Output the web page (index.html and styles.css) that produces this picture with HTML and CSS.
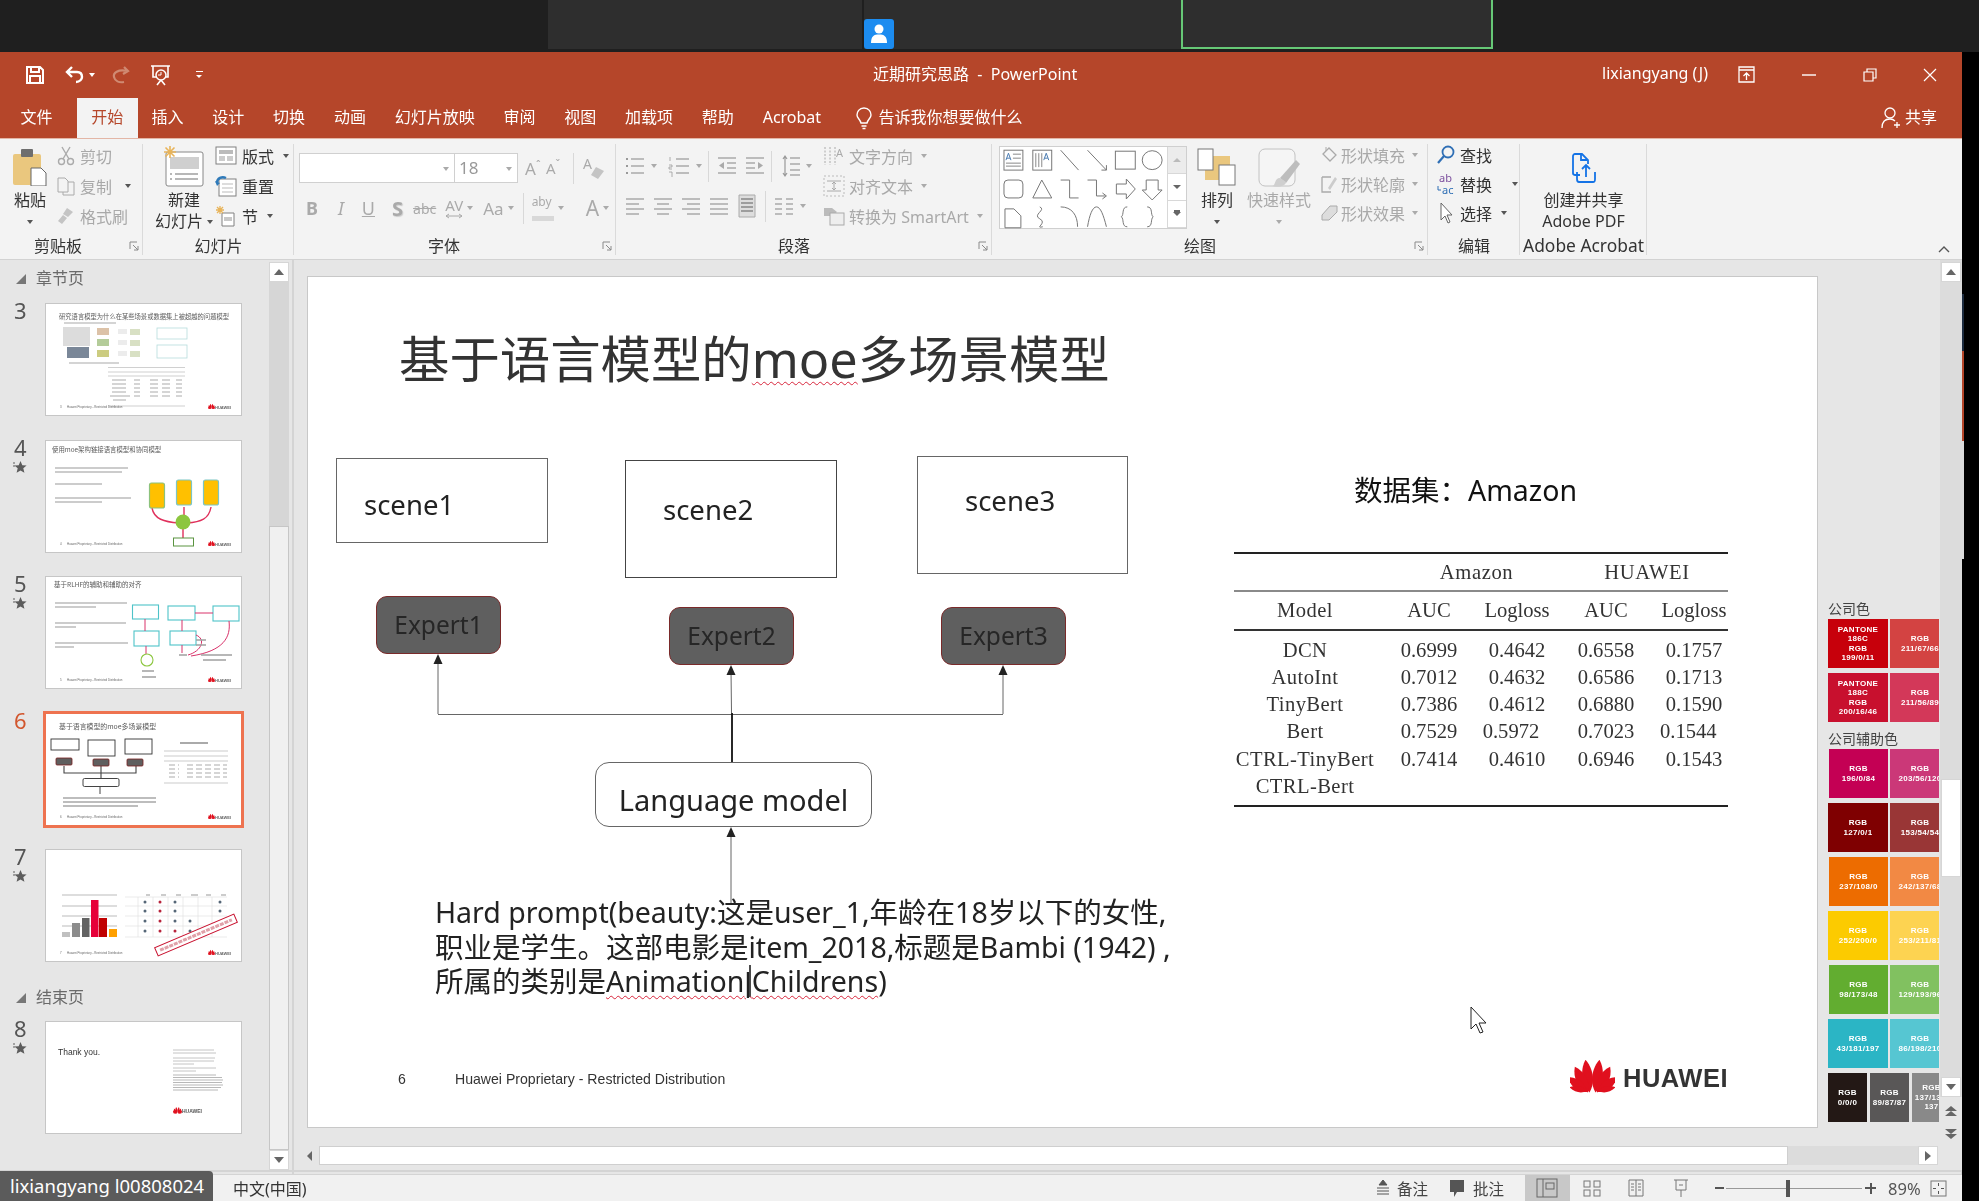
FILE: index.html
```html
<!DOCTYPE html>
<html lang="zh-CN">
<head>
<meta charset="utf-8">
<title>近期研究思路 - PowerPoint</title>
<link rel="stylesheet" href="styles.css">
</head>
<body>

<svg class="defs" width="0" height="0">
  <symbol id="hw" viewBox="0 0 45 34">
    <g fill="#e0101e">
      <path d="M0 0C-7-9-7-23 0-33C7-23 7-9 0 0Z" transform="translate(19.5 32.500) rotate(-7)"/>
      <path d="M0 0C-7-9-7-23 0-33C7-23 7-9 0 0Z" transform="translate(25.500 32.500) rotate(7)"/>
      <path d="M0 0C-7-8-7-20 0-29C7-20 7-8 0 0Z" transform="translate(18 32.500) rotate(-27)"/>
      <path d="M0 0C-7-8-7-20 0-29C7-20 7-8 0 0Z" transform="translate(27 32.500) rotate(27)"/>
      <path d="M0 0C-6-7-6-16 0-24C6-16 6-7 0 0Z" transform="translate(17 32) rotate(-52)"/>
      <path d="M0 0C-6-7-6-16 0-24C6-16 6-7 0 0Z" transform="translate(28 32) rotate(52)"/>
      <path d="M0 0C-4-5-4-12 0-18C4-12 4-5 0 0Z" transform="translate(17 31) rotate(-78)"/>
      <path d="M0 0C-4-5-4-12 0-18C4-12 4-5 0 0Z" transform="translate(28 31) rotate(78)"/>
    </g>
  </symbol>
  <symbol id="launch" viewBox="0 0 10 10">
    <path d="M1 1H8M1 1V8M4 4L9 9M9 5V9H5" fill="none" stroke="#8a8a8a"/>
  </symbol>
  <symbol id="star" viewBox="0 0 14 14">
    <path d="M7.500 1L9.300 5.200 13.600 5.500 10.300 8.300 11.400 12.800 7.500 10.400 3.600 12.800 4.700 8.300 1.400 5.500 5.700 5.200Z" fill="#5c5c5c"/>
    <path d="M0 3H2M0 6H2" stroke="#5c5c5c"/>
  </symbol>
</svg>

<div class="meeting">
  <div class="tile tile-a"></div>
  <div class="tile tile-b">
    <div class="avatar">
      <svg width="30" height="30" viewBox="0 0 30 30"><circle cx="15" cy="10" r="4.500" fill="#fff"/><path d="M7 24C7 17 10 15.500 15 15.500S23 17 23 24Z" fill="#fff"/></svg>
    </div>
  </div>
  <div class="tile tile-c"></div>
</div>

<div class="screen">
  <div class="app">

    <header class="titlebar">
      <div class="qat">
        <svg class="q-save" width="20" height="20" viewBox="0 0 20 20"><path d="M2 2H15L18 5V18H2Z M6 2V7H14V2 M5 18V11H15V18" fill="none" stroke="#fff" stroke-width="2"/></svg>
        <svg class="q-undo" width="20" height="20" viewBox="0 0 20 20"><path d="M7 2L2 7L7 12M2 7H12C16 7 17 10 17 12S15 17 11 17" fill="none" stroke="#fff" stroke-width="2.400"/></svg>
        <span class="caret caret-w q-undo-c"></span>
        <svg class="q-redo" width="20" height="20" viewBox="0 0 20 20"><path d="M14 2L18 6L13 9M17 6C8 4 3 8 4 12S9 18 14 17" fill="none" stroke="#d08a72" stroke-width="2.200"/></svg>
        <svg class="q-show" width="24" height="24" viewBox="0 0 24 24"><path d="M2 3H21M4 3V14H19V3M12 14V17M8 22L12 17L16 22" fill="none" stroke="#fff" stroke-width="1.600"/><circle cx="12" cy="12" r="5" fill="#b5462a" stroke="#fff" stroke-width="1.500"/><path d="M12 9V12H9" stroke="#fff" fill="none"/></svg>
        <span class="q-more"></span>
      </div>
      <div class="doc-name">近期研究思路&nbsp; -&nbsp; PowerPoint</div>
      <div class="win">
        <span class="user">lixiangyang (J)</span>
        <svg class="w-ribbon" width="18" height="18" viewBox="0 0 18 18"><path d="M1 1H16V16H1ZM1 4H16M8.500 14V7M5.500 10L8.500 7L11.500 10" fill="none" stroke="#fff" stroke-width="1.300"/></svg>
        <svg class="w-min" width="14" height="14" viewBox="0 0 14 14"><path d="M0 7H14" stroke="#fff" stroke-width="1.400"/></svg>
        <svg class="w-max" width="14" height="14" viewBox="0 0 14 14"><path d="M1 4H10V13H1ZM4 4V1H13V10H10" fill="none" stroke="#fff" stroke-width="1.200"/></svg>
        <svg class="w-close" width="14" height="14" viewBox="0 0 14 14"><path d="M1 1L13 13M13 1L1 13" stroke="#fff" stroke-width="1.200"/></svg>
      </div>
    </header>

    <nav class="tabs">
      <span class="tab tab-file">文件</span>
      <span class="tab tab-on">开始</span>
      <span class="tab">插入</span>
      <span class="tab">设计</span>
      <span class="tab">切换</span>
      <span class="tab">动画</span>
      <span class="tab">幻灯片放映</span>
      <span class="tab">审阅</span>
      <span class="tab">视图</span>
      <span class="tab">加载项</span>
      <span class="tab">帮助</span>
      <span class="tab">Acrobat</span>
      <span class="tell">
        <svg width="18" height="24" viewBox="0 0 18 24"><path d="M9 2C4 2 2 6 2 9C2 12 5 13 6 17H12C13 13 16 12 16 9C16 6 14 2 9 2ZM6.500 20H11.500M7.500 22.500H10.500" fill="none" stroke="#fff" stroke-width="1.400"/></svg>
        告诉我你想要做什么
      </span>
      <span class="share">
        <svg width="20" height="24" viewBox="0 0 20 24"><circle cx="9" cy="7" r="5" fill="none" stroke="#fff" stroke-width="1.300"/><path d="M1 22C1 15 5 13 9 13C11 13 13 14 14 15M13 19H19M16 16V22" fill="none" stroke="#fff" stroke-width="1.300"/></svg>
        共享
      </span>
    </nav>

    <section class="ribbon">

      <div class="grp g-clip">
        <div class="grp-body">
          <div class="big big-paste">
            <svg width="36" height="38" viewBox="0 0 36 38"><rect x="1" y="6" width="28" height="31" rx="2" fill="#eac77e"/><rect x="9" y="1" width="12" height="8" rx="1" fill="#6e6e6e"/><path d="M19 20H29L34 25V38H19Z" fill="#fff" stroke="#666"/></svg>
            <span>粘贴</span>
            <i class="caret"></i>
          </div>
          <div class="rows off">
            <div class="row"><svg width="18" height="20" viewBox="0 0 18 20"><path d="M5 1L12 13M13 1L6 13" stroke="#aaa" stroke-width="1.400"/><circle cx="4.500" cy="15.500" r="3" fill="none" stroke="#aaa" stroke-width="1.400"/><circle cx="13.500" cy="15.500" r="3" fill="none" stroke="#aaa" stroke-width="1.400"/></svg>剪切</div>
            <div class="row"><svg width="18" height="20" viewBox="0 0 18 20"><path d="M1 2H8L11 5V16H1ZM11 6H17V19H6V16" fill="#f3f3f3" stroke="#aaa"/></svg>复制<i class="caret caret-r"></i></div>
            <div class="row"><svg width="18" height="20" viewBox="0 0 18 20"><path d="M10 2L16 6L11 11L6 8ZM6 9L10 12L5 18L1 15Z" fill="#c4c4c4"/></svg>格式刷</div>
          </div>
        </div>
        <div class="grp-label lbl-clip">剪贴板<svg class="launch" width="10" height="10"><use href="#launch"/></svg></div>
      </div>

      <div class="grp g-slide">
        <div class="grp-body">
          <div class="big big-new">
            <svg width="42" height="41" viewBox="0 0 42 41"><rect x="4" y="6" width="37" height="34" rx="2" fill="#fff" stroke="#888"/><rect x="8" y="11" width="29" height="12" fill="#cfcfcf"/><path d="M8 28H10M13 28H36M8 33H10M13 33H36" stroke="#a0a0a0" stroke-width="1.500"/><g stroke="#e8b45a" stroke-width="1.600"><path d="M8 0V12M2 6H14M3.500 1.500L12.500 10.500M12.500 1.500L3.500 10.500"/></g></svg>
            <span>新建</span>
            <span class="big-two">幻灯片<i class="caret"></i></span>
          </div>
          <div class="rows">
            <div class="row"><svg width="22" height="20" viewBox="0 0 22 20"><rect x="1" y="1" width="20" height="17" fill="#fff" stroke="#808080"/><rect x="4" y="4" width="14" height="4" fill="#bbb"/><rect x="4" y="10" width="6" height="5" fill="#ccc"/><rect x="12" y="10" width="6" height="5" fill="#ccc"/></svg>版式<i class="caret"></i></div>
            <div class="row"><svg width="22" height="22" viewBox="0 0 22 22"><rect x="4" y="4" width="17" height="17" fill="#fff" stroke="#808080"/><path d="M7 9H18M7 13H18M7 17H18" stroke="#bbb"/><path d="M2 8C2 3 7 1 11 3" fill="none" stroke="#2f7ab9" stroke-width="2.500"/><path d="M0 6L5 8L2 11Z" fill="#2f7ab9"/></svg>重置</div>
            <div class="row"><svg width="22" height="22" viewBox="0 0 22 22"><path d="M7 8H19V21H7Z" fill="#fff" stroke="#808080"/><path d="M9 12H17V16H9Z" fill="#c8c8c8"/><path d="M5 1V9M1 5H9M2 2L8 8M8 2L2 8" stroke="#e8b45a" stroke-width="1.300"/></svg>节<i class="caret"></i></div>
          </div>
        </div>
        <div class="grp-label">幻灯片</div>
      </div>

      <div class="grp g-font">
        <div class="grp-body font-body">
          <div class="font-row">
            <div class="combo combo-name"><i class="caret caret-grey"></i></div>
            <div class="combo combo-size">18<i class="caret caret-grey"></i></div>
            <span class="ico-a">A<sup>ˆ</sup></span>
            <span class="ico-a ico-a2">A<sup>ˇ</sup></span>
            <span class="vline"></span>
            <svg width="24" height="26" viewBox="0 0 24 26"><text x="1" y="14" font-size="14" fill="#aaa" font-family="Noto Sans">A</text><path d="M14 12L22 16L16 24L9 20Z" fill="#c4c4c4"/></svg>
          </div>
          <div class="font-row fmt-row">
            <b class="f-b">B</b><i class="f-i">I</i><u class="f-u">U</u><b class="f-s">S</b>
            <s class="f-abc">abc</s>
            <span class="f-av">AV<svg width="18" height="6" viewBox="0 0 18 6"><path d="M1 3H17M4 1L1 3L4 5M14 1L17 3L14 5" fill="none" stroke="#aaa"/></svg></span><i class="caret caret-grey"></i>
            <span class="f-aa">Aa</span><i class="caret caret-grey"></i>
            <span class="vline"></span>
            <span class="f-hl">aby<em></em></span><i class="caret caret-grey"></i>
            <span class="f-color">A</span><i class="caret caret-grey"></i>
          </div>
        </div>
        <div class="grp-label lbl-font">字体<svg class="launch" width="10" height="10"><use href="#launch"/></svg></div>
      </div>

      <div class="grp g-para">
        <div class="grp-body">
          <div class="para-left">
            <div class="para-row">
              <svg width="20" height="22" viewBox="0 0 20 22"><path d="M6 4H19M6 11H19M6 18H19" stroke="#aaa" stroke-width="1.300"/><path d="M1 4H3M1 11H3M1 18H3" stroke="#999" stroke-width="2"/></svg><i class="caret caret-grey"></i>
              <svg width="22" height="22" viewBox="0 0 22 22"><path d="M8 4H21M8 11H21M8 18H21" stroke="#aaa" stroke-width="1.300"/><path d="M2 2V6M1 10H4V12H1V14H4M1 17H4V22" stroke="#999" stroke-width=".8" fill="none"/></svg><i class="caret caret-grey"></i>
              <span class="vline"></span>
              <svg width="20" height="22" viewBox="0 0 20 22"><path d="M1 3H19M10 8H19M10 13H19M1 18H19" stroke="#aaa" stroke-width="1.300"/><path d="M7 7L2 10.500L7 14Z" fill="#aaa"/></svg>
              <svg width="20" height="22" viewBox="0 0 20 22"><path d="M1 3H19M1 8H10M1 13H10M1 18H19" stroke="#aaa" stroke-width="1.300"/><path d="M13 7L18 10.500L13 14Z" fill="#aaa"/></svg>
              <span class="vline"></span>
              <svg width="18" height="24" viewBox="0 0 18 24"><path d="M8 4H18M8 10H18M8 16H18M8 21H18" stroke="#aaa" stroke-width="1.300"/><path d="M3 2V22M1 5L3 2L5 5M1 19L3 22L5 19" fill="none" stroke="#999" stroke-width="1.200"/></svg><i class="caret caret-grey"></i>
            </div>
            <div class="para-row para-align">
              <svg width="20" height="20" viewBox="0 0 20 20"><path d="M1 3H19M1 8H14M1 13H19M1 18H14" stroke="#aaa" stroke-width="1.300"/></svg>
              <svg width="20" height="20" viewBox="0 0 20 20"><path d="M1 3H19M4 8H16M1 13H19M4 18H16" stroke="#aaa" stroke-width="1.300"/></svg>
              <svg width="20" height="20" viewBox="0 0 20 20"><path d="M1 3H19M6 8H19M1 13H19M6 18H19" stroke="#aaa" stroke-width="1.300"/></svg>
              <svg width="20" height="20" viewBox="0 0 20 20"><path d="M1 3H19M1 8H19M1 13H19M1 18H19" stroke="#aaa" stroke-width="1.300"/></svg>
              <svg width="20" height="24" viewBox="0 0 20 24"><path d="M2 1H18V23H2Z" fill="#ddd" stroke="#aaa"/><path d="M4 5H16M4 9H16M4 13H16M4 17H16" stroke="#888" stroke-width="1.300"/></svg>
              <span class="vline"></span>
              <svg width="20" height="20" viewBox="0 0 20 20"><path d="M1 3H8M12 3H19M1 8H8M12 8H19M1 13H8M12 13H19M1 18H8M12 18H19" stroke="#aaa" stroke-width="1.300"/></svg><i class="caret caret-grey"></i>
            </div>
          </div>
          <div class="rows off para-rows">
            <div class="row"><svg width="22" height="22" viewBox="0 0 22 22"><path d="M2 2V20M7 2V20M12 2V20" stroke="#aaa" stroke-dasharray="2 1.500"/><text x="13" y="12" font-size="11" fill="#aaa" font-family="Noto Sans">A</text></svg>文字方向<i class="caret caret-grey"></i></div>
            <div class="row"><svg width="22" height="22" viewBox="0 0 22 22"><path d="M1 1H21V21H1Z" fill="none" stroke="#bbb" stroke-dasharray="2 2"/><path d="M4 6H18M4 16H18M11 7V15M9 9L11 7L13 9M9 13L11 15L13 13" stroke="#aaa" fill="none"/></svg>对齐文本<i class="caret caret-grey"></i></div>
            <div class="row"><svg width="22" height="22" viewBox="0 0 22 22"><path d="M1 3L9 3L14 7L9 11H1Z" fill="#bbb"/><rect x="7" y="8" width="14" height="12" fill="#eee" stroke="#aaa"/></svg>转换为 SmartArt<i class="caret caret-grey"></i></div>
          </div>
        </div>
        <div class="grp-label lbl-para">段落<svg class="launch" width="10" height="10"><use href="#launch"/></svg></div>
      </div>

      <div class="grp g-draw">
        <div class="grp-body">
          <div class="gallery">
            <svg width="168" height="83" viewBox="0 0 168 83" fill="none" stroke="#777" stroke-width="1">
              <rect x="4" y="3" width="19" height="20" fill="#fff"/><path d="M6 13L8.500 6L11 13M7 11H10" stroke="#4a7bb0"/><path d="M13 7H21M13 11H21M6 16H21M6 19H21" stroke="#888"/>
              <rect x="33" y="3" width="19" height="20"/><path d="M36 6V20M39 6V20M42 6V20" stroke="#888"/><path d="M44 13L46.500 6L49 13M45 11H48" stroke="#4a7bb0"/>
              <path d="M61 3L79 23"/><path d="M88 3L107 23M107 18V23H102"/>
              <rect x="116" y="4" width="20" height="18"/><ellipse cx="153" cy="13" rx="10" ry="9.500"/>
              <rect x="4" y="33" width="19" height="18" rx="4"/><path d="M42 33L33 51H52Z"/><path d="M61 33H70V51H79"/><path d="M88 33H97V49H106M103 46L107 49L103 52"/><path d="M117 37H127V32L136 42L127 52V47H117Z"/><path d="M147 33H159V43H163L153 53L143 43H147Z"/>
              <path d="M5 62H14L21 69V81H5Z"/><path d="M40 60C47 63 32 68 40 72S34 82 43 80"/><path d="M61 60C72 60 78 68 78 80"/><path d="M88 80C90 68 93 60 97 60S104 68 107 80"/><path d="M128 60C122 60 125 68 122 70C125 72 122 80 128 80"/><path d="M148 60C154 60 151 68 154 70C151 72 154 80 148 80"/>
            </svg>
            <div class="gal-scroll">
              <span class="off-btn"><i></i></span>
              <span><i></i></span>
              <span><i class="more"></i></span>
            </div>
          </div>
          <div class="big big-arr">
            <svg width="40" height="38" viewBox="0 0 40 38"><rect x="8" y="8" width="25" height="24" fill="#eac77e"/><rect x="1" y="1" width="15" height="21" fill="#fff" stroke="#777"/><rect x="22" y="17" width="16" height="20" fill="#fff" stroke="#777"/></svg>
            <span>排列</span><i class="caret"></i>
          </div>
          <div class="big big-style off">
            <svg width="42" height="42" viewBox="0 0 42 42"><rect x="1" y="1" width="36" height="37" rx="6" fill="#f5f5f5" stroke="#c2c2c2"/><path d="M22 30L38 12L42 16L28 35Z" fill="#bdbdbd"/><path d="M22 30C16 30 18 38 14 38C20 40 28 38 28 34Z" fill="#cfcfcf"/></svg>
            <span>快速样式</span><i class="caret caret-grey"></i>
          </div>
          <div class="rows tight off shape-rows">
            <div class="row"><svg width="18" height="20" viewBox="0 0 18 20"><path d="M3 9L9 3L16 10L10 16Z" fill="#f3f3f3" stroke="#aaa" stroke-width="1.300"/><path d="M6 2V6" stroke="#aaa"/></svg>形状填充<i class="caret caret-grey"></i></div>
            <div class="row"><svg width="18" height="20" viewBox="0 0 18 20"><path d="M2 3H11M2 3V18H11" fill="none" stroke="#aaa" stroke-width="1.300"/><path d="M8 14L15 3L17 5L10 16Z" fill="#ccc"/></svg>形状轮廓<i class="caret caret-grey"></i></div>
            <div class="row"><svg width="18" height="20" viewBox="0 0 18 20"><path d="M2 12L10 3H17V9L9 17H2Z" fill="#ddd" stroke="#aaa"/></svg>形状效果<i class="caret caret-grey"></i></div>
          </div>
        </div>
        <div class="grp-label lbl-para">绘图<svg class="launch" width="10" height="10"><use href="#launch"/></svg></div>
      </div>

      <div class="grp g-edit">
        <div class="grp-body">
          <div class="rows tight">
            <div class="row"><svg width="18" height="20" viewBox="0 0 18 20"><circle cx="11" cy="7" r="5.500" fill="none" stroke="#2f6fb5" stroke-width="1.800"/><path d="M7 11L1 18" stroke="#2f6fb5" stroke-width="2.200"/></svg>查找</div>
            <div class="row"><svg class="rep" width="18" height="24" viewBox="0 0 18 24"><text x="2" y="10" font-size="11" fill="#7c4f9e" font-family="Noto Sans">ab</text><text x="5" y="22" font-size="11" fill="#2f6fb5" font-family="Noto Sans">ac</text><path d="M1 14V18H4" stroke="#2f6fb5" fill="none"/></svg>替换<i class="caret caret-r2"></i></div>
            <div class="row"><svg width="18" height="24" viewBox="0 0 18 24"><path d="M4 2V19L8 15L11 22L13 21L10 14L15 14Z" fill="#fff" stroke="#666"/></svg>选择<i class="caret"></i></div>
          </div>
        </div>
        <div class="grp-label">编辑</div>
      </div>

      <div class="grp g-acro">
        <div class="grp-body">
          <div class="big big-acro">
            <svg width="26" height="30" viewBox="0 0 26 30" fill="none" stroke="#1473e6" stroke-width="1.800"><path d="M9 22H4C2 22 2 21 2 20V3C2 2 3 1 4 1H11L17 7V11M10 1V7H16"/><path d="M6 19V26C6 28 7 29 8 29H22C24 29 24 28 24 26V19M15 24V13M11 16L15 12L19 16"/></svg>
            <span>创建并共享</span>
            <span>Adobe PDF</span>
          </div>
        </div>
        <div class="grp-label">Adobe Acrobat</div>
      </div>

      <svg class="collapse" width="12" height="8" viewBox="0 0 12 8"><path d="M1 7L6 2L11 7" fill="none" stroke="#555" stroke-width="1.400"/></svg>
    </section>

    <main class="work">

      <aside class="pane">
        <div class="pane-list">
          <div class="sec sec-first"><i class="tri"></i>章节页</div>

          <div class="slide-row">
            <div class="num">3</div>
            <svg class="thumb" width="195" height="111" viewBox="0 0 195 111">
              <text x="13" y="15" class="th-title" font-size="6.300">研究语言模型为什么在某些场景或数据集上被超越的问题模型</text>
              <rect x="18" y="18" width="52" height="2" fill="#d4d4d4"/>
              <rect x="17" y="23" width="27" height="19" fill="#dcdcdc"/><rect x="21" y="43" width="22" height="11" fill="#7a8798"/>
              <rect x="51" y="24" width="12" height="7" fill="#dcc2a8"/><rect x="51" y="35" width="12" height="7" fill="#b4cc9a"/><rect x="51" y="46" width="12" height="7" fill="#cccc80"/>
              <rect x="72" y="25" width="9" height="5" fill="#ececec"/><rect x="72" y="36" width="9" height="5" fill="#ececec"/><rect x="72" y="47" width="9" height="5" fill="#ececec"/>
              <rect x="84" y="25" width="10" height="6" fill="#d8e0c4"/><rect x="84" y="36" width="10" height="6" fill="#d8e0c4"/><rect x="84" y="47" width="10" height="6" fill="#d8e0c4"/>
              <rect x="111" y="24" width="30" height="11" fill="none" stroke="#b6dcdc" stroke-width=".8"/><rect x="111" y="41" width="30" height="13" fill="none" stroke="#b6dcdc" stroke-width=".8"/>
              <rect x="23" y="58" width="50" height="2" fill="#d4d4d4"/>
              <path d="M62 63.500H139M62 68H139M62 72H139M62 102H139" stroke="#b0b0b0" stroke-width=".6"/>
              <path d="M66 76H80M66 80H80M66 84H80M66 88H80M64 92H84M67 96H80M88 76H94M104 76H112M116 76H124M130 76H136M88 80H94M104 80H112M116 80H124M130 80H136M88 84H94M104 84H112M116 84H124M130 84H136M88 88H94M104 88H112M116 88H124M130 88H136M88 92H94M104 92H112M116 92H124M130 92H136" stroke="#c8c8c8" stroke-width="1.500"/>
              <g class="th-foot"><text x="14" y="104">3</text><text x="21" y="104">Huawei Proprietary - Restricted Distribution</text><use href="#hw" x="162" y="99.500" width="7" height="6"/><text x="169" y="104.500" class="th-brand">HUAWEI</text></g>
            </svg>
          </div>

          <div class="slide-row">
            <div class="num">4<svg class="star" width="14" height="14"><use href="#star"/></svg></div>
            <svg class="thumb" width="195" height="111" viewBox="0 0 195 111">
              <text x="6" y="11" class="th-title" font-size="6.400">使用moe架构链接语言模型和协同模型</text>
              <path d="M9 27H82M9 31H76M9 43H56M9 57H85M9 61H56" stroke="#cccccc" stroke-width="2"/>
              <path d="M106 67C108 78 118 81 133 82M138 66V76M165 66C163 78 155 81 141 82M137 97V88" fill="none" stroke="#e0305c" stroke-width="1.400"/>
              <rect x="103.500" y="42" width="15" height="25" rx="2" fill="#ffc000" stroke="#8cc27c" stroke-width="1.200"/>
              <rect x="130.500" y="39" width="15" height="25" rx="2" fill="#ffc000" stroke="#7cc5c4" stroke-width="1.200"/>
              <rect x="157.500" y="39" width="15" height="25" rx="2" fill="#ffc000" stroke="#7cc5c4" stroke-width="1.200"/>
              <circle cx="137" cy="81" r="7.500" fill="#8cc63f"/>
              <rect x="127.500" y="97" width="20" height="8" fill="#fff" stroke="#5a9440"/>
              <g class="th-foot"><text x="14" y="104">4</text><text x="21" y="104">Huawei Proprietary - Restricted Distribution</text><use href="#hw" x="162" y="99.500" width="7" height="6"/><text x="169" y="104.500" class="th-brand">HUAWEI</text></g>
            </svg>
          </div>

          <div class="slide-row">
            <div class="num">5<svg class="star" width="14" height="14"><use href="#star"/></svg></div>
            <svg class="thumb" width="195" height="111" viewBox="0 0 195 111">
              <text x="8" y="10" class="th-title" font-size="6.500">基于RLHF的辅助和辅助的对齐</text>
              <path d="M9 26H81M9 30H50M9 46H80M9 50H30M9 66H82M9 70H28" stroke="#cccccc" stroke-width="2"/>
              <g fill="#fff" stroke="#4ec3c8" stroke-width="1.100">
                <rect x="86.500" y="28" width="26" height="14"/><rect x="88" y="54" width="25" height="15"/>
                <rect x="122" y="29" width="27" height="14"/><rect x="167" y="29" width="26" height="15"/><rect x="124" y="54" width="26" height="14"/>
              </g>
              <path d="M99 42V54M100 69V77M136 43V54M136 68V76M149 36H167M183 44C185 60 178 74 145 79M150 58C160 62 156 74 142 78" fill="none" stroke="#d9326a" stroke-width="1"/>
              <circle cx="101" cy="83" r="6" fill="#fff" stroke="#8cc63f" stroke-width="1.100"/>
              <path d="M96 94H108M96 100H110M150 63H160M150 68H160M155 78H186M157 83H180M133 78H141" stroke="#a0a0a0" stroke-width="1.400"/>
              <g class="th-foot"><text x="14" y="104">5</text><text x="21" y="104">Huawei Proprietary - Restricted Distribution</text><use href="#hw" x="162" y="99.500" width="7" height="6"/><text x="169" y="104.500" class="th-brand">HUAWEI</text></g>
            </svg>
          </div>

          <div class="slide-row">
            <div class="num num-on">6</div>
            <svg class="thumb thumb-on" width="195" height="111" viewBox="0 0 195 111">
              <text x="13" y="15" class="th-title" font-size="6.900">基于语言模型的moe多场景模型</text>
              <g fill="#fff" stroke="#333" stroke-width=".9"><rect x="5" y="25" width="28" height="11"/><rect x="42" y="26" width="27" height="16"/><rect x="79" y="25" width="27" height="15"/></g>
              <path d="M18 52V59H90V52M55 51V64" fill="none" stroke="#444" stroke-width="1.100"/>
              <g fill="#5f5f5f" stroke="#7a2020" stroke-width=".8"><rect x="10" y="44" width="16" height="7" rx="1"/><rect x="47" y="45" width="16" height="7" rx="1"/><rect x="81" y="45" width="16" height="7" rx="1"/></g>
              <rect x="37" y="64.500" width="36" height="8" rx="1.500" fill="#fff" stroke="#444"/>
              <path d="M54 73V80" stroke="#444"/>
              <path d="M17 84H110M17 88H110M17 92H92" stroke="#a8a8a8" stroke-width="1.500"/>
              <path d="M134 29H162" stroke="#aaa" stroke-width="2"/>
              <path d="M118 37H182M118 42H182M118 47H182M118 69H182" stroke="#aaa" stroke-width=".6"/>
              <path d="M123 51H133M123 55H133M123 59H133M123 63H133M141 51H181M141 55H181M141 59H181M141 63H181" stroke="#c8c8c8" stroke-width="1.500" stroke-dasharray="6 3"/>
              <g class="th-foot"><text x="14" y="104">6</text><text x="21" y="104">Huawei Proprietary - Restricted Distribution</text><use href="#hw" x="162" y="99.500" width="7" height="6"/><text x="169" y="104.500" class="th-brand">HUAWEI</text></g>
            </svg>
          </div>

          <div class="slide-row">
            <div class="num">7<svg class="star" width="14" height="14"><use href="#star"/></svg></div>
            <svg class="thumb" width="195" height="111" viewBox="0 0 195 111">
              <path d="M16 45H71M16 56H71M16 66H71M16 76H71" stroke="#bbb"/>
              <rect x="16" y="82" width="8" height="5" fill="#c0c0c0"/><rect x="26" y="73" width="8" height="14" fill="#8c8c8c"/><rect x="36" y="68" width="7.500" height="19" fill="#636363"/><rect x="45" y="50" width="7.500" height="37" fill="#e60039"/><rect x="53" y="68" width="8" height="19" fill="#c00000"/><rect x="63" y="79" width="8" height="8" fill="#ffa000"/>
              <path d="M79 47H181M79 56H181M79 66H181M79 76H181M79 87H181M92 47V87M107 47V87M122 47V87M137 47V87M152 47V87M166 47V87" stroke="#e2e2e2" stroke-width=".7"/>
              <path d="M100 45H104M115 45H120M130 45H135M145 45H152M160 45H165M175 45H180" stroke="#999" stroke-width="1.200"/>
              <g fill="#567"><circle cx="99" cy="52" r="1.500"/><circle cx="129" cy="52" r="1.500"/><circle cx="99" cy="61" r="1.500"/><circle cx="129" cy="61" r="1.500"/><circle cx="99" cy="71" r="1.500"/><circle cx="129" cy="71" r="1.500"/><circle cx="144" cy="71" r="1.500"/><circle cx="99" cy="81" r="1.500"/><circle cx="174" cy="52" r="1.500"/><circle cx="174" cy="61" r="1.500"/><circle cx="144" cy="81" r="1.500"/></g>
              <g fill="#b8243c"><circle cx="114" cy="52" r="1.500"/><circle cx="114" cy="61" r="1.500"/><circle cx="114" cy="71" r="1.500"/><circle cx="114" cy="81" r="1.500"/><circle cx="129" cy="81" r="1.500"/></g>
              <g transform="translate(150 85) rotate(-23)"><rect x="-43" y="-4.500" width="86" height="9" fill="#fff" stroke="#c8102e"/><path d="M-39 0H39" stroke="#e0a0a8" stroke-width="3" stroke-dasharray="4 1"/></g>
              <g class="th-foot"><text x="14" y="104">7</text><text x="21" y="104">Huawei Proprietary - Restricted Distribution</text><use href="#hw" x="162" y="99.500" width="7" height="6"/><text x="169" y="104.500" class="th-brand">HUAWEI</text></g>
            </svg>
          </div>

          <div class="sec"><i class="tri"></i>结束页</div>

          <div class="slide-row">
            <div class="num">8<svg class="star" width="14" height="14"><use href="#star"/></svg></div>
            <svg class="thumb" width="195" height="111" viewBox="0 0 195 111">
              <text x="12" y="33" font-size="8.500" fill="#333" font-family="Liberation Sans">Thank you.</text>
              <path d="M127 28H168M127 31H170M127 36H169M127 39H168M127 42H148M127 46H170M127 49H150" stroke="#c4c4c4" stroke-width="1"/>
              <path d="M127 53H170M127 55.500H176M127 58H177M127 60.500H176M127 63H177M127 65.500H175M127 68H172" stroke="#888" stroke-width=".6"/>
              <use href="#hw" x="127" y="85" width="9" height="7"/>
              <text x="136" y="91" font-size="5" font-weight="700" fill="#555" font-family="Liberation Sans">HUAWEI</text>
            </svg>
          </div>
        </div>

        <div class="pane-scroll">
          <span class="sbtn"><i class="up"></i></span>
          <span class="pane-track"></span>
          <span class="pane-thumb"></span>
          <span class="sbtn"><i class="down"></i></span>
        </div>
      </aside>
      <div class="split"></div>

      <div class="editor">
        <div class="editor-top">
          <div class="stage">

            <article class="slide">
              <h1 class="s-title">基于语言模型的<span class="squiggle">moe</span>多场景模型</h1>

              <svg class="wires" width="1509" height="850" viewBox="0 0 1509 850">
                <g fill="none" stroke="#666" stroke-width="1">
                  <path d="M130 437.500H695M130 437V382M695 437V393M423.500 436L423 393M423 555V626"/>
                </g>
                <path d="M424 485V436" stroke="#111" stroke-width="1.800"/>
                <g fill="#222">
                  <path d="M130 377L125.500 387H134.500Z"/>
                  <path d="M423 388L418.500 398H427.500Z"/>
                  <path d="M695 388L690.500 398H699.500Z"/>
                  <path d="M423 550L418.500 560H427.500Z"/>
                </g>
                <path d="M442 688V720" stroke="#111" stroke-width="1.500"/>
                <path d="M1163 730V752L1168 747L1172 756L1175 755L1171 746H1178Z" fill="#fff" stroke="#222"/>
              </svg>

              <div class="scene sc1">scene1</div>
              <div class="scene sc2">scene2</div>
              <div class="scene sc3">scene3</div>
              <div class="expert ex1">Expert1</div>
              <div class="expert ex2">Expert2</div>
              <div class="expert ex3">Expert3</div>
              <div class="lm">Language model</div>

              <p class="prompt">Hard prompt(beauty:这是user_1,年龄在18岁以下的女性,<br>职业是学生。这部电影是item_2018,标题是Bambi (1942) ,<br>所属的类别是<span class="squiggle">Animation<span class="pipe">|</span>Childrens</span>)</p>

              <div class="data-title">数据集：Amazon</div>
              <table class="res">
                <colgroup><col class="c1"><col class="c2"><col class="c3"><col class="c4"><col class="c5"></colgroup>
                <thead>
                  <tr class="h1"><th></th><th colspan="2" class="amz">Amazon</th><th colspan="2" class="hw">HUAWEI</th></tr>
                  <tr class="h2"><th>Model</th><th>AUC</th><th>Logloss</th><th>AUC</th><th>Logloss</th></tr>
                </thead>
                <tbody>
                  <tr class="first"><td>DCN</td><td>0.6999</td><td>0.4642</td><td>0.6558</td><td>0.1757</td></tr>
                  <tr><td>AutoInt</td><td>0.7012</td><td>0.4632</td><td>0.6586</td><td>0.1713</td></tr>
                  <tr><td>TinyBert</td><td>0.7386</td><td>0.4612</td><td>0.6880</td><td>0.1590</td></tr>
                  <tr><td>Bert</td><td>0.7529</td><td class="nudge">0.5972</td><td>0.7023</td><td class="nudge">0.1544</td></tr>
                  <tr><td>CTRL-TinyBert</td><td>0.7414</td><td>0.4610</td><td>0.6946</td><td>0.1543</td></tr>
                  <tr class="last"><td>CTRL-Bert</td><td></td><td></td><td></td><td></td></tr>
                </tbody>
              </table>

              <span class="s-num">6</span>
              <span class="s-foot">Huawei Proprietary - Restricted Distribution</span>
              <svg class="s-logo" width="45" height="34"><use href="#hw"/></svg>
              <span class="s-brand">HUAWEI</span>
            </article>

            <aside class="swatches">
              <div class="sw-label">公司色</div>
              <div class="sw-row">
                <div class="sw w1 s-c1"><span>PANTONE</span><span>186C</span><span>RGB</span><span>199/0/11</span></div>
                <div class="sw w2 s-c2"><span>RGB</span><span>211/67/66</span></div>
              </div>
              <div class="sw-row">
                <div class="sw w1 s-c3"><span>PANTONE</span><span>188C</span><span>RGB</span><span>200/16/46</span></div>
                <div class="sw w2 s-c4"><span>RGB</span><span>211/56/89</span></div>
              </div>
              <div class="sw-label sw-label2">公司辅助色</div>
              <div class="sw-row in">
                <div class="sw w1 s-c5"><span>RGB</span><span>196/0/84</span></div>
                <div class="sw w2 s-c6"><span>RGB</span><span>203/56/120</span></div>
              </div>
              <div class="sw-row">
                <div class="sw w1 s-c7"><span>RGB</span><span>127/0/1</span></div>
                <div class="sw w2 s-c8"><span>RGB</span><span>153/54/54</span></div>
              </div>
              <div class="sw-row in">
                <div class="sw w1 s-c9"><span>RGB</span><span>237/108/0</span></div>
                <div class="sw w2 s-c10"><span>RGB</span><span>242/137/68</span></div>
              </div>
              <div class="sw-row">
                <div class="sw w1 s-c11"><span>RGB</span><span>252/200/0</span></div>
                <div class="sw w2 s-c12"><span>RGB</span><span>253/211/81</span></div>
              </div>
              <div class="sw-row in">
                <div class="sw w1 s-c13"><span>RGB</span><span>98/173/48</span></div>
                <div class="sw w2 s-c14"><span>RGB</span><span>129/193/96</span></div>
              </div>
              <div class="sw-row">
                <div class="sw w1 s-c15"><span>RGB</span><span>43/181/197</span></div>
                <div class="sw w2 s-c16"><span>RGB</span><span>86/198/210</span></div>
              </div>
              <div class="sw-row three">
                <div class="sw w3 s-c17"><span>RGB</span><span>0/0/0</span></div>
                <div class="sw w3 s-c18"><span>RGB</span><span>89/87/87</span></div>
                <div class="sw w3 s-c19"><span>RGB</span><span>137/137/</span><span>137</span></div>
              </div>
            </aside>
          </div>

          <div class="vscroll">
            <span class="sbtn"><i class="up"></i></span>
            <span class="v-gap1"></span>
            <span class="v-thumb"></span>
            <span class="v-gap2"></span>
            <span class="sbtn"><i class="down"></i></span>
            <span class="pg pg-up"><i class="up"></i><i class="up"></i></span>
            <span class="pg"><i class="down"></i><i class="down"></i></span>
          </div>
        </div>

        <div class="hscroll">
          <span class="h-btn"><i class="left"></i></span>
          <span class="h-thumb"></span>
          <span class="h-track"></span>
          <span class="sbtn sbtn-r"><i class="right"></i></span>
        </div>
      </div>
    </main>

    <footer class="status">
      <span class="st-lang">中文(中国)</span>
      <span class="st-note">
        <svg width="14" height="18" viewBox="0 0 14 18"><path d="M7 1L11 6H3ZM1 9H13M1 12H13M1 15H13" fill="#555" stroke="#555"/></svg>备注
      </span>
      <span class="st-comment">
        <svg width="18" height="20" viewBox="0 0 18 20"><path d="M2 2H16V14H9L6 19V14H2Z" fill="#555"/></svg>批注
      </span>
      <span class="st-view st-on"><svg width="22" height="20" viewBox="0 0 22 20"><rect x="1" y="1" width="20" height="18" fill="none" stroke="#666"/><path d="M7 1V19" stroke="#666"/><rect x="10" y="5" width="8" height="6" fill="none" stroke="#666"/></svg></span>
      <span class="st-view"><svg width="20" height="18" viewBox="0 0 20 18" fill="none" stroke="#777"><rect x="2" y="2" width="6" height="6"/><rect x="12" y="2" width="6" height="6"/><rect x="2" y="11" width="6" height="6"/><rect x="12" y="11" width="6" height="6"/></svg></span>
      <span class="st-view"><svg width="18" height="20" viewBox="0 0 18 20" fill="none" stroke="#777"><path d="M2 2H16V18H2ZM9 2V18M4 6H7M4 9H7M4 12H7M11 6H14M11 9H14M11 12H14"/></svg></span>
      <span class="st-view"><svg width="16" height="20" viewBox="0 0 16 20" fill="none" stroke="#777"><path d="M1 2H15M3 2V12H13V2M8 12V19M6 7H10"/></svg></span>
      <span class="zoomer">
        <i class="z-minus"></i>
        <span class="z-track"><i class="z-thumb"></i></span>
        <i class="z-plus"></i>
      </span>
      <span class="z-val">89%</span>
      <svg class="st-fit" width="17" height="17" viewBox="0 0 17 17" fill="none" stroke="#777"><rect x="1" y="1" width="15" height="15"/><path d="M8.500 3V6M8.500 11V14M3 8.500H6M11 8.500H14" stroke="#555"/></svg>
    </footer>
  </div>

  <div class="edge">
    <span class="edge-blue"></span>
    <span class="edge-red"></span>
    <span class="edge-white"></span>
  </div>
</div>

<div class="nametag">lixiangyang l00808024</div>

</body>
</html>
```

FILE: styles.css
```css
*{ box-sizing: border-box; }
html, body{ margin: 0; padding: 0; }
body{ width: 1979px; height: 1201px; overflow: hidden; background: #000; position: relative;
      font-family: "Noto Sans", "Noto Sans CJK SC", sans-serif; font-size: 16px; color: #3c3c3c; }
.defs{ position: absolute; }
i{ font-style: normal; }

/* meeting strip */
.meeting{ height: 52px; background: #1f1f1f; display: flex; padding-left: 548px; }
.tile{ height: 49px; background: #2e2e2e; }
.tile-a{ width: 314px; }
.tile-b{ width: 317px; margin-left: 2px; position: relative; }
.tile-c{ width: 312px; background: #2e2e2e; border: 2px solid #66c876; border-top: 0; }
.avatar{ position: absolute; left: 0; bottom: 0; width: 30px; height: 30px; background: #1c8cf0; border-radius: 3px; }
.avatar svg{ display: block; }

.screen{ display: flex; height: 1149px; }
.app{ width: 1962px; display: flex; flex-direction: column; background: #e6e6e6; filter: blur(.35px); }
.edge{ width: 17px; background: #000; display: flex; flex-direction: column; padding-top: 242px; }
.edge span{ display: block; width: 2px; }
.edge-blue{ height: 57px; background: #1d2c40; }
.edge-red{ height: 90px; background: #b5462a; }
.edge-white{ height: 118px; background: #dcdcdc; }

/* title bar */
.titlebar{ height: 46px; background: #b5462a; color: #fff; display: flex; align-items: center; position: relative; }
.qat{ display: flex; align-items: center; padding-left: 25px; width: 560px; }
.q-undo{ margin-left: 20px; }
.q-undo-c{ margin-left: 4px; }
.q-redo{ margin-left: 15px; }
.q-show{ margin-left: 19px; }
.q-more{ margin-left: 23px; width: 7px; height: 8px; border-top: 1px solid #fff; position: relative; }
.q-more::after{ content: ""; position: absolute; left: 0; top: 3px; border: 3.500px solid transparent; border-top-color: #fff; border-bottom: 0; }
.doc-name{ margin: -5px 0 0 313px; font-size: 16px; white-space: nowrap; }
.win{ margin-left: auto; display: flex; align-items: center; padding-right: 25px; }
.user{ font-size: 16px; margin: -5px 30px 0 0; }
.w-ribbon{ margin-right: 46px; }
.w-min{ margin-right: 47px; }
.w-max{ margin-right: 46px; }

/* tabs */
.tabs{ height: 40px; background: #b5462a; color: #fff; display: flex; align-items: stretch; padding-left: 6px; font-size: 16px; }
.tab{ padding: 5px 14.400px 0; line-height: 28px; white-space: nowrap; }
.tab-file{ margin-right: 10px; }
.tab-on{ background: #f3f3f3; color: #b5462a; margin-right: -.5px; }
.tell{ margin-left: 19px; padding-top: 5px; display: flex; align-items: flex-start; gap: 6px; line-height: 28px; }
.tell svg{ margin-top: 3px; }
.share{ margin-left: auto; padding: 5px 25px 0 0; display: flex; align-items: flex-start; gap: 4px; line-height: 28px; }
.share svg{ margin-top: 3px; }

/* ribbon */
.ribbon{ height: 122px; background: #f3f3f3; border-top: 1px solid #e3b6a6; border-bottom: 1px solid #d2d2d2; display: flex; position: relative; }
.grp{ position: relative; display: flex; flex-direction: column; }
.grp::after{ content: ""; position: absolute; right: 0; top: 5px; bottom: 4px; width: 1px; background: #dadada; }
.grp-body{ height: 97px; display: flex; }
.grp-label{ height: 24px; line-height: 22px; text-align: center; color: #333; position: relative; white-space: nowrap; }
.launch{ position: absolute; right: 4px; top: 6px; }
.g-clip{ width: 143px; } .g-slide{ width: 151px; } .g-font{ width: 322px; } .g-para{ width: 376px; }
.g-draw{ width: 436px; } .g-edit{ width: 92px; } .g-acro{ width: 127px; }
.lbl-clip{ padding-right: 27px; }
.lbl-font{ padding-right: 22px; }
.lbl-para{ padding-right: 20px; }
.collapse{ position: absolute; right: 12px; top: 106px; }

.caret{ display: inline-block; width: 0; height: 0; border: 3.500px solid transparent; border-top: 4px solid #555; border-bottom: 0; margin-left: 4px; vertical-align: middle; flex: none; }
.caret-w{ border-top-color: #fff; }
.caret-grey{ border-top-color: #aaa; }
.caret-r{ margin-left: 8px; }
.caret-r2{ margin-left: 15px; }

.big{ display: flex; flex-direction: column; align-items: center; line-height: 22px; white-space: nowrap; color: #333; }
.big svg{ flex: none; }
.big-paste{ width: 36px; margin-left: 12px; padding-top: 9px; }
.big-paste span{ margin-top: 3px; }
.big-paste .caret{ margin: 9px 0 0; }
.big-new{ width: 72px; margin-left: 5px; padding-top: 7px; line-height: 21px; }
.big-new svg{ margin-left: -2px; }
.big-new span:first-of-type{ margin-top: 3px; }
.big-two{ display: flex; align-items: center; }
.rows{ display: flex; flex-direction: column; padding-top: 1.500px; white-space: nowrap; color: #333; }
.row{ height: 30px; display: flex; align-items: center; gap: 5px; }
.rows.tight .row{ height: 29px; }
.off, .off .row{ color: #a9a9a9; }
.g-clip .rows{ margin-left: 9px; }
.g-slide .rows{ margin-left: -5px; }

/* font group */
.font-body{ flex-direction: column; padding: 14px 0 0 5px; }
.font-row{ display: flex; align-items: center; height: 30px; }
.combo{ height: 30px; background: #fff; border: 1px solid #d0d0d0; position: relative; color: #999; line-height: 28px; padding-left: 4px; }
.combo .caret{ position: absolute; right: 5px; top: 13px; }
.combo-name{ width: 156px; }
.combo-size{ width: 64px; margin-left: -1px; font-size: 17px; }
.ico-a{ color: #aaa; font-size: 17px; margin-left: 7px; width: 18px; white-space: nowrap; }
.ico-a sup{ font-size: 11px; vertical-align: 6px; line-height: 0; }
.ico-a2{ font-size: 15px; margin-left: 3px; }
.vline{ display: block; width: 1px; height: 31px; background: #d8d8d8; flex: none; }
.font-row .vline{ margin: 0 8px 0 9px; }
.fmt-row{ margin-top: 10px; padding-left: 7px; color: #aaa; font-size: 18px; }
.fmt-row b, .fmt-row i, .fmt-row u, .fmt-row s, .fmt-row span{ font-family: "Noto Sans", sans-serif; }
.f-i{ margin-left: 20px; font-style: italic; }
.f-u{ margin-left: 18px; }
.f-s{ margin-left: 17px; text-shadow: 1px 1px 1px #ccc; font-size: 20px; }
.f-abc{ margin-left: 10px; font-size: 14px; }
.f-av{ margin-left: 9px; font-size: 15px; line-height: 15px; display: flex; flex-direction: column; align-items: center; }
.f-aa{ margin-left: 10px; font-size: 17px; }
.f-hl{ display: block; width: 22px; font-size: 12px; line-height: 12px; margin-left: 0; }
.f-hl em{ display: block; height: 5px; background: #d8d8d8; margin-top: 8px; }
.f-color{ margin-left: 22px; font-size: 21px; }

/* paragraph group */
.para-left{ width: 207px; padding: 12px 0 0 9px; flex: none; }
.para-row{ height: 30px; display: flex; align-items: center; gap: 0; }
.para-row svg{ flex: none; }
.para-row .caret{ margin: 0 11px 0 6px; }
.para-row .vline{ margin: 0 10px 0 6px; }
.para-row .caret + .vline{ margin: 0 8px 0 -5px; }
.para-row svg + svg{ margin-left: 8px; }
.para-align{ margin-top: 10px; padding-left: 0; }
.para-align svg + svg{ margin-left: 8px; }
.para-align .vline{ margin: 0 8px 0 8px; }
.para-rows{ margin-left: 0; }
.para-rows .row{ gap: 4px; }

/* drawing group */
.gallery{ width: 188px; height: 83px; margin: 7px 0 0 7px; background: #fff; border: 1px solid #cfcfcf; display: flex; flex: none; }
.gallery svg{ display: block; }
.gal-scroll{ width: 19px; display: flex; flex-direction: column; border-left: 1px solid #d8d8d8; margin-left: auto; }
.gal-scroll span{ flex: 1; display: flex; align-items: center; justify-content: center; border-bottom: 1px solid #d8d8d8; }
.gal-scroll .off-btn{ background: #ececec; }
.gal-scroll i{ border: 4px solid transparent; border-top: 4px solid #666; border-bottom: 0; }
.gal-scroll .off-btn i{ border-top: 0; border-bottom: 4px solid #bbb; }
.gal-scroll i.more{ border-top-color: #666; box-shadow: 0 -3px 0 -1px #666; }
.big-arr{ width: 40px; margin-left: 10px; padding-top: 9px; }
.big-arr span{ margin-top: 3px; }
.big-arr .caret{ margin: 9px 0 0; }
.big-style{ width: 66px; margin-left: 9px; padding-top: 9px; color: #a9a9a9; }
.big-style span{ margin-top: -1px; }
.big-style .caret{ margin: 9px 0 0; }
.shape-rows{ margin-left: 8px; }
.shape-rows .row{ gap: 3px; }

/* edit group */
.g-edit .rows{ margin-left: 9px; }
.g-edit .row{ gap: 5px; }

/* acrobat group */
.big-acro{ width: 100%; padding-top: 14px; line-height: 21px; }
.big-acro span:first-of-type{ margin-top: 7px; }
.g-acro .grp-label{ font-size: 17.400px; line-height: 20px; }

/* work area */
.work{ flex: 1; display: flex; min-height: 0; position: relative; }
.pane{ width: 292px; display: flex; flex: none; }
.pane-list{ width: 269px; flex: none; overflow: hidden; }
.sec{ height: 35.500px; padding-top: 0; display: flex; align-items: flex-start; font-size: 16px; line-height: 20px; color: #6a6a6a; gap: 10px; padding-left: 16px; }
.sec .tri{ margin-top: 6px; }
.sec-first{ height: 44px; padding-top: 8px; }
.tri{ width: 0; height: 0; border-left: 10px solid transparent; border-bottom: 10px solid #777; }
.slide-row{ display: flex; height: 111px; margin-bottom: 25.600px; position: relative; }
.num{ width: 46px; flex: none; padding-left: 14px; margin-top: -6px; font-size: 22px; line-height: 24px; color: #555; display: flex; flex-direction: column; }
.num-on{ color: #d2572f; }
.star{ margin-left: -1px; margin-top: 1px; }
.thumb{ display: block; background: #fff; box-shadow: 0 0 0 1px #c6c6c6; filter: blur(.3px); }
.thumb-on{ box-shadow: 0 0 0 3px #ee7350; }
.th-title{ fill: #5a5a5a; font-family: "Noto Sans CJK SC", sans-serif; }
.th-foot text{ font-family: "Liberation Sans", sans-serif; font-size: 2.900px; fill: #666; }
.th-foot .th-brand{ font-size: 4px; font-weight: 700; }

.pane-scroll{ width: 20px; display: flex; flex-direction: column; margin-top: 2px; flex: none; height: 908px; }
.sbtn{ height: 20px; width: 20px; background: #fff; border: 1px solid #d6d6d6; display: flex; align-items: center; justify-content: center; flex: none; }
.up, .down, .left, .right{ display: block; width: 0; height: 0; border: 5px solid transparent; }
.up{ border-bottom: 6px solid #666; border-top: 0; }
.down{ border-top: 6px solid #666; border-bottom: 0; }
.left{ border-right: 5px solid #666; border-left: 0; }
.right{ border-left: 6px solid #666; border-right: 0; }
.pane-track{ height: 244px; background: #d6d6d6; }
.pane-thumb{ height: 624px; background: #f0f0f0; border: 1px solid #c6c6c6; }
.split{ width: 2px; background: #d4d4d4; flex: none; }

/* editor */
.editor{ flex: 1; display: flex; flex-direction: column; min-width: 0; }
.editor-top{ height: 886px; display: flex; }
.stage{ width: 1646px; display: flex; padding: 17px 0 0 14px; overflow: hidden; flex: none; }
.slide{ width: 1509px; height: 850px; background: #fff; box-shadow: 0 0 0 1px #c8c8c8; position: relative; flex: none; color: #222; overflow: hidden; }
.wires{ position: absolute; left: 0; top: 0; }
.s-title{ position: absolute; left: 91px; top: 51px; margin: 0; font-weight: 400; font-size: 50.400px; line-height: 62px; color: #333; white-space: nowrap; }
.squiggle{ text-decoration: underline wavy #d8263c 1px; text-underline-offset: 3px; }
.pipe{ font-family: "Liberation Sans", sans-serif; }

.scene{ position: absolute; width: 212px; background: #fff; border: 1.500px solid #666; font-size: 27.500px; line-height: 36px; }
.sc1{ left: 28px; top: 181px; height: 85px; padding: 28px 0 0 27px; }
.sc2{ left: 317px; top: 183px; height: 118px; padding: 31px 0 0 37px; border-color: #444; }
.sc3{ left: 609px; top: 179px; width: 211px; height: 118px; padding: 26px 0 0 47px; }

.expert{ position: absolute; width: 125px; height: 58px; background: #5f5f5f; border: 1px solid #7a2a2a; border-radius: 11px; color: #262626; font-size: 24.500px; display: flex; align-items: center; justify-content: center; padding-bottom: 1px; }
.ex1{ left: 68px; top: 319px; }
.ex2{ left: 361px; top: 330px; }
.ex3{ left: 633px; top: 330px; }

.lm{ position: absolute; left: 287px; top: 485px; width: 277px; height: 65px; background: #fff; border: 1.500px solid #666; border-radius: 14px; font-size: 29px; display: flex; align-items: center; justify-content: center; padding-top: 10px; white-space: nowrap; }

.prompt{ position: absolute; left: 127px; top: 618px; margin: 0; font-size: 28.500px; line-height: 34.500px; white-space: nowrap; color: #222; }
.data-title{ position: absolute; left: 1046px; top: 193px; font-size: 28.500px; line-height: 40px; color: #111; white-space: nowrap; }

.res{ position: absolute; left: 926px; top: 275px; width: 494px; table-layout: fixed; border-collapse: collapse; font-family: "Liberation Serif", serif; font-size: 20.600px; color: #333; border-top: 2px solid #222; border-bottom: 2px solid #222; }
.res th{ font-weight: 400; padding: 0; text-align: center; }
.res td{ padding: 0; text-align: center; white-space: nowrap; height: 27.400px; line-height: 22px; }
.res td:first-child, .res .h2 th:first-child{ letter-spacing: .4px; }
.res .c1{ width: 142px; } .res .c2{ width: 106px; } .res .c3{ width: 70px; } .res .c4{ width: 108px; } .res .c5{ width: 68px; }
.h1 th{ height: 38px; border-bottom: 2px solid #8a8a8a; letter-spacing: .6px; }
.h1 .amz{ padding-left: 25px; }
.h1 .hw{ padding-left: 14px; }
.h2 th{ height: 39px; border-bottom: 2px solid #333; }
.res tr.first td{ height: 33px; padding-bottom: 2.500px; vertical-align: bottom; }
.res tr.last td{ height: 33.500px; padding-top: 2.500px; vertical-align: top; }
.res td.nudge{ padding-right: 12px; }

.s-num, .s-foot{ position: absolute; top: 793px; font-family: "Liberation Sans", sans-serif; font-size: 14.100px; line-height: 18px; color: #333; white-space: nowrap; }
.s-num{ left: 90px; }
.s-foot{ left: 147px; }
.s-logo{ position: absolute; left: 1262px; top: 783px; }
.s-brand{ position: absolute; left: 1315px; top: 786px; font-family: "Liberation Sans", sans-serif; font-weight: 700; font-size: 25.500px; line-height: 30px; color: #333; letter-spacing: .5px; }

/* swatches on the pasteboard */
.swatches{ width: 111px; margin: 322px 0 0 11px; overflow: hidden; flex: none; height: 527px; }
.sw-label{ height: 20px; line-height: 20px; font-size: 14px; color: #444; white-space: nowrap; }
.sw-label2{ margin-top: 5px; height: 22px; line-height: 24px; }
.sw-row{ display: flex; gap: 2px; height: 49px; margin-bottom: 5px; }
.sw-row.in{ padding-left: 1px; }
.three{ gap: 3px; }
.sw{ flex: none; height: 49px; display: flex; flex-direction: column; align-items: center; justify-content: center; font-family: "Liberation Sans", sans-serif; font-weight: 700; font-size: 8px; line-height: 9.500px; color: #fff; white-space: nowrap; letter-spacing: .3px; }
.w1{ width: 60px; }
.sw-row.in .w1{ width: 59px; }
.w2{ width: 60px; }
.w3{ width: 39px; }
.s-c1{ background: #c7000b; } .s-c2{ background: #d34342; } .s-c3{ background: #c8102e; } .s-c4{ background: #d33859; }
.s-c5{ background: #c40054; } .s-c6{ background: #cb3878; } .s-c7{ background: #7f0001; } .s-c8{ background: #993636; }
.s-c9{ background: #ed6c00; } .s-c10{ background: #f28944; } .s-c11{ background: #fccb00; } .s-c12{ background: #fdd351; }
.s-c13{ background: #62ad30; } .s-c14{ background: #81c160; } .s-c15{ background: #2bb5c5; } .s-c16{ background: #56c6d2; }
.s-c17{ background: #231815; } .s-c18{ background: #595757; } .s-c19{ background: #898989; }

.vscroll{ width: 22px; flex: none; display: flex; flex-direction: column; align-items: center; padding: 2px 0 0; background: linear-gradient(#dcdcdc 837px, #e6e6e6 837px); }
.v-gap1{ height: 497px; }
.v-thumb{ width: 20px; height: 98px; background: #fff; border: 1px solid #d6d6d6; flex: none; }
.v-gap2{ height: 200px; }
.pg{ height: 23px; display: flex; flex-direction: column; align-items: center; justify-content: center; flex: none; }
.pg-up{ margin-top: 2px; }
.pg i{ border-width: 5px 6px; margin-bottom: 0; }

.hscroll{ height: 19px; display: flex; padding-left: 6px; }
.h-btn{ width: 19px; display: flex; align-items: center; justify-content: center; }
.h-thumb{ width: 1469px; background: #fff; border: 1px solid #cfcfcf; flex: none; }
.h-track{ width: 130px; background: #dcdcdc; flex: none; }
.sbtn-r{ height: 19px; }

/* status bar */
.status{ height: 27px; background: #f1f1f1; border-top: 1px solid #d4d4d4; display: flex; align-items: center; font-size: 15.500px; color: #444; box-shadow: 0 -3px 0 -1px #e6e6e6, 0 -4px 0 #d4d4d4; white-space: nowrap; }
.status svg{ flex: none; display: block; }
.st-lang{ margin-left: 233px; width: 1143px; color: #333; font-size: 16px; }
.st-note, .st-comment{ display: flex; align-items: center; gap: 7px; }
.st-comment{ margin-left: 20px; }
.st-view{ width: 44.500px; height: 26px; display: flex; align-items: center; justify-content: center; flex: none; }
.st-on{ background: #c8c8c8; margin-left: 21px; }
.zoomer{ width: 165px; margin-left: 8px; padding-left: 4px; display: flex; align-items: center; position: relative; height: 26px; }
.z-minus{ width: 9px; height: 2px; background: #555; display: block; margin-right: 2px; }
.z-track{ display: block; flex: 1; height: 1px; background: #999; position: relative; margin-right: 3px; }
.z-thumb{ position: absolute; left: 60px; top: -8px; width: 4px; height: 17px; background: #555; }
.z-plus{ width: 11px; height: 11px; display: block; flex: none; background: linear-gradient(#555, #555) center / 11px 2px no-repeat, linear-gradient(#555, #555) center / 2px 11px no-repeat; }
.z-val{ margin-left: 12px; font-size: 16.500px; color: #555; width: 35px; }
.st-fit{ margin-left: 7px; }

.nametag{ position: absolute; left: 0; bottom: 0; width: 213px; height: 30px; background: #5b5b5b; color: #fff; border-radius: 0 4px 0 0; font-size: 18.500px; line-height: 29px; padding-left: 10px; white-space: nowrap; }
```
